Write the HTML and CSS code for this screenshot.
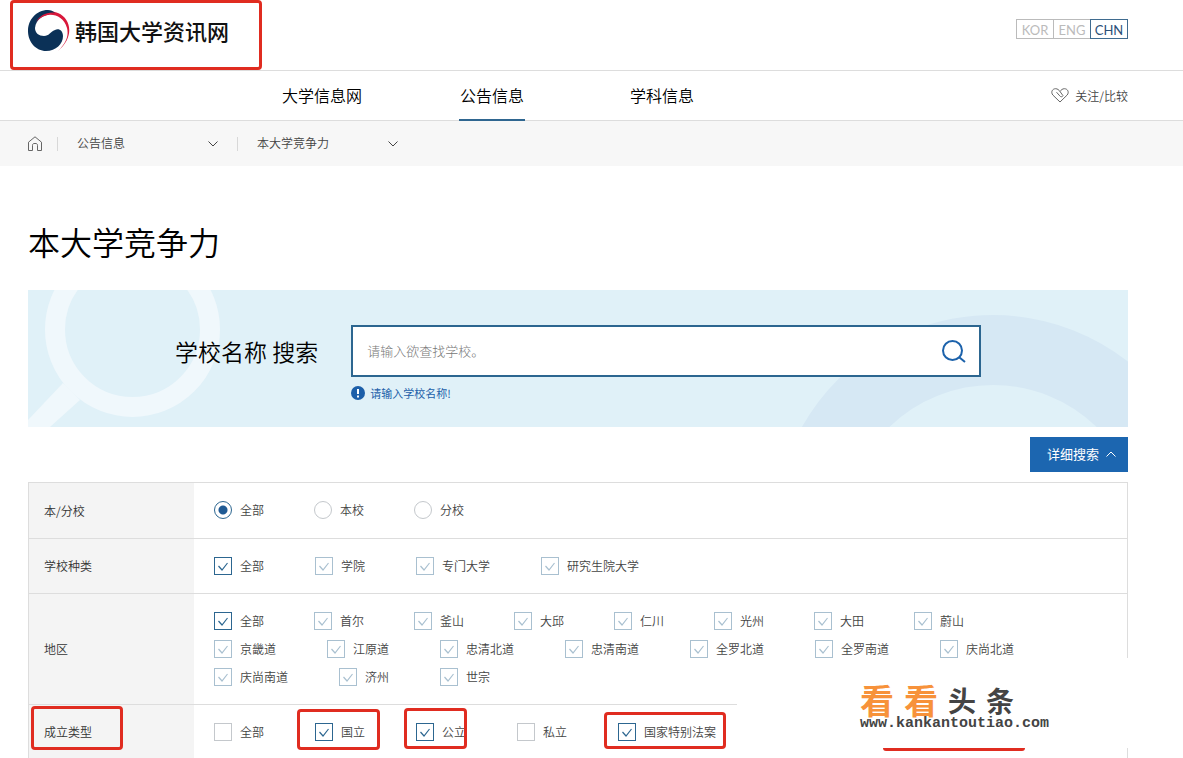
FILE: index.html
```html
<!DOCTYPE html>
<html lang="zh-CN">
<head>
<meta charset="utf-8">
<title>韩国大学资讯网</title>
<link rel="stylesheet" href="styles.css">
</head>
<body>
<header class="top wrap">
  <a class="logo" href="#">
    <svg class="logo-mark" viewBox="0 0 43 43" aria-hidden="true">
      <path fill="#d9183b" d="M7 10C12 3 22-1 30 3c14 6 16 25 0 38 8-8 11-15 9-23C36 8 28 4 20 5 14 5 10 8 7 12z"/>
      <path fill="#0b3157" d="M20 0C8 0 0 10 0 21s8 20 18 20c10 0 17-7 17-15 0-5-4-8-8-6-5 2-6 6-11 6-5 0-9-3-9-8C8 9 16 4 27 3 25 1 23 0 20 0z"/>
      <path fill="#d9183b" d="M8 12C12 5 20 1 29 3 21 4 13 6 8 12z"/>
    </svg>
    <span>韩国大学资讯网</span>
  </a>
  <nav class="lang" aria-label="Language">
    <a href="#">KOR</a><a href="#">ENG</a><a class="on" href="#">CHN</a>
  </nav>
</header>
<div class="gnb">
  <div class="gnb-inner wrap">
    <nav class="menu">
      <a href="#">大学信息网</a>
      <a class="on" href="#">公告信息</a>
      <a href="#">学科信息</a>
    </nav>
    <a class="compare" href="#">
      <svg width="18" height="15" viewBox="0 0 18 15" fill="none" stroke="#666" aria-hidden="true"><path d="M9 14 1.800 7C-.5 4 1.500.7 4.600.7 6.500.7 8 2 9 3.500l3 4.200c-.8 1.500-2.300 1.300-3.200.2L5.500 4.200M9 3.500C10 2 11.500.7 13.400.7c3.100 0 5.100 3.300 2.800 6.300L9 14"/></svg>
      <span>关注/比较</span>
    </a>
  </div>
</div>
<div class="crumbs">
  <div class="crumbs-inner wrap">
    <a class="home" href="#" aria-label="首页"><svg width="14" height="15" viewBox="0 0 14 15" fill="none" stroke="#666" aria-hidden="true"><path d="M.5 14.500V6.200L7 .8l6.500 5.400v8.300h-4V9.300c0-1-.6-1.800-1.500-1.800H6c-.9 0-1.500.8-1.500 1.800v5.200z"/></svg></a>
    <select aria-label="一级菜单"><option>公告信息</option></select>
    <select aria-label="二级菜单"><option>本大学竞争力</option></select>
  </div>
</div>
<main class="wrap">
  <h1>本大学竞争力</h1>
  <form>
    <div class="banner">
      <svg class="deco deco-left" width="200" height="137" aria-hidden="true"><g fill="none" stroke="#f0f8fc" stroke-width="20"><circle cx="104.500" cy="39.500" r="77.500"/></g><path fill="#f0f8fc" d="M35 93 52 110 22 137H0v-7z"/></svg>
      <svg class="deco deco-right" width="335" height="137" aria-hidden="true"><circle cx="200" cy="244" r="184" fill="none" stroke="#d6e8f4" stroke-width="70"/></svg>
      <label for="q">学校名称 搜索</label>
      <div class="field">
        <input id="q" type="text" placeholder="请输入欲查找学校。">
        <button type="button" aria-label="搜索"><svg width="24" height="24" viewBox="0 0 24 24" fill="none" stroke="#1c62ab" stroke-width="2" aria-hidden="true"><circle cx="10.500" cy="11.500" r="9.500"/><path d="m17.500 18.500 5.500 4.500"/></svg></button>
      </div>
      <p class="hint"><svg width="14" height="14" viewBox="0 0 14 14" aria-hidden="true"><circle cx="7" cy="7" r="7" fill="#1c5fa9"/><path stroke="#fff" stroke-width="2" d="M7 3v5M7 9.500v2"/></svg>请输入学校名称!</p>
    </div>
    <div class="tools"><button class="detail" type="button">详细搜索<svg width="10" height="6" viewBox="0 0 10 6" fill="none" stroke="#fff" aria-hidden="true"><path d="M.5 5.500 5 1l4.500 4.500"/></svg></button></div>
    <table class="filters">
      <tr><th scope="row">本/分校</th><td>
        <div class="opts">
          <label><input type="radio" name="campus" checked>全部</label>
          <label><input type="radio" name="campus">本校</label>
          <label><input type="radio" name="campus">分校</label>
        </div></td></tr>
      <tr><th scope="row">学校种类</th><td>
        <div class="opts wide">
          <label><input type="checkbox" checked>全部</label>
          <label><input class="soft" type="checkbox" checked>学院</label>
          <label><input class="soft" type="checkbox" checked>专门大学</label>
          <label><input class="soft" type="checkbox" checked>研究生院大学</label>
        </div></td></tr>
      <tr><th scope="row">地区</th><td>
        <div class="opts">
          <label><input type="checkbox" checked>全部</label>
          <label><input class="soft" type="checkbox" checked>首尔</label>
          <label><input class="soft" type="checkbox" checked>釜山</label>
          <label><input class="soft" type="checkbox" checked>大邱</label>
          <label><input class="soft" type="checkbox" checked>仁川</label>
          <label><input class="soft" type="checkbox" checked>光州</label>
          <label><input class="soft" type="checkbox" checked>大田</label>
          <label><input class="soft" type="checkbox" checked>蔚山</label>
        </div>
        <div class="opts wide">
          <label><input class="soft" type="checkbox" checked>京畿道</label>
          <label><input class="soft" type="checkbox" checked>江原道</label>
          <label><input class="soft" type="checkbox" checked>忠清北道</label>
          <label><input class="soft" type="checkbox" checked>忠清南道</label>
          <label><input class="soft" type="checkbox" checked>全罗北道</label>
          <label><input class="soft" type="checkbox" checked>全罗南道</label>
          <label><input class="soft" type="checkbox" checked>庆尚北道</label>
        </div>
        <div class="opts wide">
          <label><input class="soft" type="checkbox" checked>庆尚南道</label>
          <label><input class="soft" type="checkbox" checked>济州</label>
          <label><input class="soft" type="checkbox" checked>世宗</label>
        </div></td></tr>
      <tr><th scope="row">成立类型</th><td>
        <div class="opts wide">
          <label><input type="checkbox">全部</label>
          <label><input type="checkbox" checked>国立</label>
          <label><input type="checkbox" checked>公立</label>
          <label><input type="checkbox">私立</label>
          <label><input type="checkbox" checked>国家特别法案</label>
        </div></td></tr>
    </table>
  </form>
</main>
<div class="mark mark-logo"></div>
<div class="mark mark-type"></div>
<div class="mark mark-national"></div>
<div class="mark mark-public"></div>
<div class="mark mark-special"></div>
<aside class="stamp">
  <div class="stamp-name"><b>看</b><b>看</b><strong>头</strong><strong>条</strong></div>
  <div class="stamp-url">www.kankantoutiao.com</div>
</aside>
<div class="mark-line"></div>
</body>
</html>
```
FILE: styles.css
```css
* { box-sizing: border-box; }
body {
  margin: 0;
  position: relative;
  background: #fff;
  color: #444;
  font: 300 12px/18px "Noto Sans CJK SC", "Noto Sans", sans-serif;
}
a { color: inherit; text-decoration: none; }
button, input, select { font: inherit; color: inherit; margin: 0; }
svg { display: block; flex: none; }
.wrap { padding: 0 55px 0 28px; }

.top { display: flex; justify-content: space-between; align-items: flex-start; height: 70px; }
.logo { display: flex; align-items: center; gap: 4px; padding-top: 10px; color: #111; font-size: 22px; font-weight: 500; line-height: 40px; }
.logo span { padding-bottom: 3px; }
.logo-mark { width: 43px; height: 43px; }
.lang { display: flex; padding-top: 19px; font: 13px/18px Lato, sans-serif; color: #bbb; }
.lang a { width: 38px; height: 20px; border: 1px solid #bbb; text-align: center; line-height: 20px; }
.lang a + a { margin-left: -1px; }
.lang .on { border-color: #3f6b8f; color: #2c5078; }

.gnb { border-top: 1px solid #ddd; border-bottom: 1px solid #ddd; }
.gnb-inner { display: flex; justify-content: space-between; align-items: center; height: 49px; }
.menu { display: grid; grid-template-columns: repeat(3, 170px); justify-items: center; margin-left: 209px; color: #000; font-size: 16px; font-weight: 350; line-height: 48px; }
.menu a { height: 50px; padding: 0 1px; }
.menu .on { border-bottom: 2px solid #2f6690; }
.compare { display: flex; align-items: center; gap: 6px; font-weight: 350; }

.crumbs { background: #f7f7f7; }
.crumbs-inner { display: flex; align-items: center; height: 45px; }
.home { margin-right: 15px; }
.crumbs select {
  width: 180px; height: 18px; padding: 0 30px 2px 20px;
  border: 0; border-radius: 0;
  appearance: none; line-height: 16px;
  color: #444; font-weight: 350;
  background:
    linear-gradient(#d8d8d8, #d8d8d8) no-repeat left center / 1px 14px,
    url("data:image/svg+xml,%3Csvg xmlns='http://www.w3.org/2000/svg' width='10' height='6' fill='none' stroke='%23444'%3E%3Cpath d='M.5.5 5 5 9.500.5'/%3E%3C/svg%3E") no-repeat right 19px center;
}

h1 { margin: 51px 0 25px; color: #000; font-size: 32px; font-weight: 350; line-height: 48px; }
.banner {
  position: relative;
  display: grid; grid-template-columns: auto 1fr; column-gap: 33px; row-gap: 7px; align-items: center; align-content: start;
  height: 137px; padding: 35px 147px 0; background: #e0f1f8;
}
.deco { position: absolute; top: 0; }
.deco-left { left: 0; }
.deco-right { right: 0; }
.banner label { position: relative; color: #000; font-size: 23px; font-weight: 350; line-height: 34px; }
.field { position: relative; display: flex; align-items: center; height: 52px; padding-right: 13px; border: 2px solid #2c6690; background: #fff; }
.field input { flex: 1; min-width: 0; height: 48px; padding: 0 14px 2px; border: 0; outline: 0; background: none; font-size: 13px; }
.field input::placeholder { color: #777; opacity: 1; }
.field button { padding: 0; border: 0; background: none; }
.hint { position: relative; grid-column: 2; display: flex; align-items: center; gap: 5px; margin: 0; color: #1c5fa9; font-size: 11px; font-weight: 400; }

.tools { display: flex; justify-content: flex-end; margin: 10px 0 10px; }
.detail { display: flex; align-items: center; justify-content: center; gap: 7px; width: 98px; height: 35px; padding: 0 0 1px 5px; border: 0; background: #1c66b0; color: #fff; font-size: 13px; font-weight: 400; }

.filters { width: 100%; border: 1px solid #ddd; border-bottom: 0; border-spacing: 0; }
.filters th { width: 165px; padding: 0 15px; background: #f4f4f4; color: #333; font-weight: 350; text-align: left; }
.filters td { padding: 18px 0 18px 20px; }
.filters tr:first-child td { padding-bottom: 19px; }
.filters tr + tr > * { border-top: 1px solid #ddd; }
.filters tr:last-child td { padding-bottom: 17px; }
.opts { display: flex; column-gap: 50px; }
.opts.wide { column-gap: 51px; }
.opts + .opts { margin-top: 10px; }
.opts label { display: flex; align-items: center; gap: 8px; white-space: nowrap; font-weight: 350; }
.opts input { appearance: none; flex: none; width: 18px; height: 18px; border: 1px solid #c4c8cc; background: #fff center no-repeat; }
.opts input[type="radio"] { border-radius: 50%; }
.opts input[type="radio"]:checked { border-color: #2c6690; background-image: radial-gradient(circle, #1f5a94 4px, transparent 5px); }
.opts input[type="checkbox"]:checked {
  border-color: #2c6690;
  background-image: url("data:image/svg+xml,%3Csvg xmlns='http://www.w3.org/2000/svg' width='16' height='16' fill='none' stroke='%232c6690' stroke-width='1.200'%3E%3Cpath d='m3.500 8 3.500 4 5.500-7'/%3E%3C/svg%3E");
}
.opts input.soft[type="checkbox"]:checked {
  border-color: #a9c0d0;
  background-image: url("data:image/svg+xml,%3Csvg xmlns='http://www.w3.org/2000/svg' width='16' height='16' fill='none' stroke='%23a9c0d0' stroke-width='1.200'%3E%3Cpath d='m3.500 8 3.500 4 5.500-7'/%3E%3C/svg%3E");
}

.mark { position: absolute; border: 3px solid #e02c20; border-radius: 4px; pointer-events: none; }
.mark-logo { left: 10px; top: 0; width: 252px; height: 70px; }
.mark-type { left: 31px; top: 706px; width: 92px; height: 44px; }
.mark-national { left: 297px; top: 709px; width: 83px; height: 41px; }
.mark-public { left: 404px; top: 708px; width: 63px; height: 41px; }
.mark-special { left: 604px; top: 712px; width: 122px; height: 37px; }
.mark-line { position: absolute; left: 883px; top: 748px; width: 142px; height: 3px; background: #e02c20; border-radius: 0 0 3px 3px; }
.stamp { position: absolute; left: 737px; right: 0; top: 658px; height: 90px; padding: 26px 0 0 123px; background: #fff; color: #444; }
.stamp-name { display: flex; align-items: flex-end; gap: 10px; height: 32px; line-height: 32px; }
.stamp-name b { color: #f7923a; font-size: 34px; font-weight: 700; }
.stamp-name strong { font-size: 28px; font-weight: 700; }
.stamp-url { font: bold 15px/16px "Liberation Mono", monospace; }
```
